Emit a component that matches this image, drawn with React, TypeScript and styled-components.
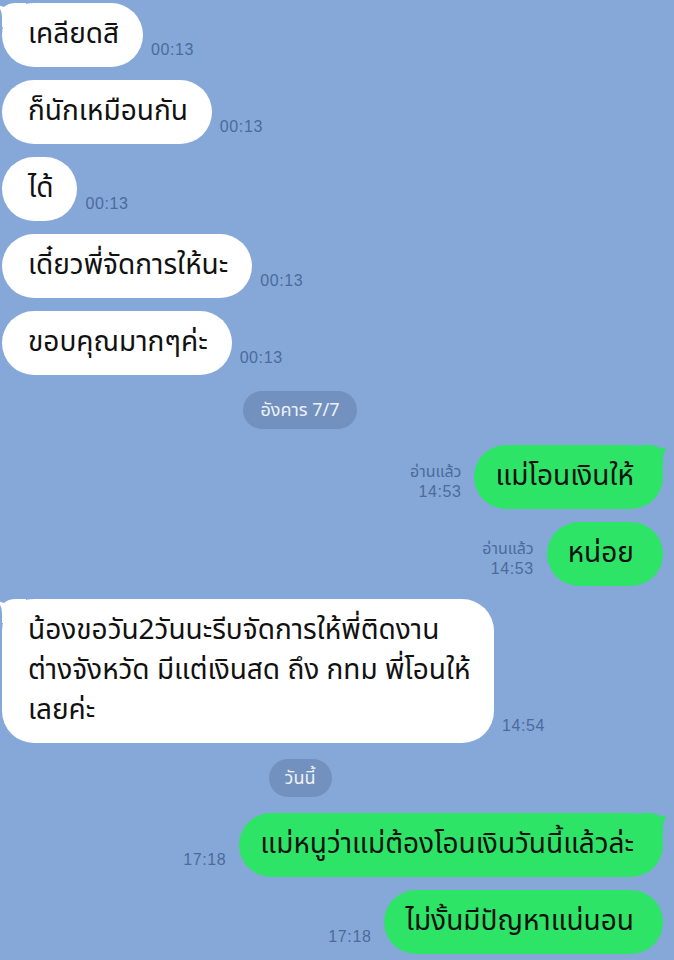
import styled, { createGlobalStyle } from 'styled-components';

const GlobalStyle = createGlobalStyle`
  html, body {
    margin: 0;
    padding: 0;
    background: #86a8d9;
  }
  body {
    width: 674px;
    height: 960px;
    overflow: hidden;
  }
`

const Chat = styled.div`
  display: flex;
  flex-direction: column;
  gap: 13px;
  padding-top: 3px;
  width: 674px;
  height: 960px;
  box-sizing: border-box;
  background: #86a8d9;
  font-family: "Noto Sans Thai", "Noto Sans", "DejaVu Sans", sans-serif;
`

const IncomingRow = styled.div`
  display: flex;
  align-items: flex-end;
  gap: 8px;
  padding-left: 2px;
`

const OutgoingRow = styled.div`
  display: flex;
  align-items: flex-end;
  justify-content: flex-end;
  gap: 13px;
  padding-right: 11px;
`

const DateRow = styled.div`
  display: flex;
  justify-content: center;
  padding-right: 74px;
  margin: 3px 0;
`

const DatePill = styled.div<{ $w: number }>`
  width: ${p => p.$w}px;
  height: 38px;
  border-radius: 19px;
  background: #7291be;
  color: #eef2f9;
  font-size: 18px;
  display: flex;
  align-items: center;
  justify-content: center;
`

const Bubble = styled.div<{ $out?: boolean; $w?: number }>`
  position: relative;
  box-sizing: border-box;
  ${p => p.$w ? `width: ${p.$w}px;` : ''}
  padding: ${p => p.$out ? '12px 29px 12px 21px' : '12px 24px 12px 26px'};
  border-radius: 32px;
  background: ${p => p.$out ? '#2de466' : '#ffffff'};
  color: #111;
  font-size: 28px;
  line-height: 40px;
  white-space: pre;
`

const Tail = styled.svg<{ $out?: boolean }>`
  position: absolute;
  top: 0;
  width: 28px;
  height: 24px;
  ${p => p.$out ? 'right: -4px;' : 'left: -4px; transform: scaleX(-1);'}
`

const Meta = styled.div<{ $out?: boolean }>`
  display: flex;
  flex-direction: column;
  align-items: ${p => p.$out ? 'flex-end' : 'flex-start'};
  padding-bottom: 7px;
  color: #4a6b9b;
  font-size: 16px;
  line-height: 20px;
`

const Read = styled.span`
  font-size: 16px;
`

const Time = styled.span`
  font-family: "Liberation Sans", Arial, sans-serif;
  letter-spacing: 0.6px;
`

function BubbleTail({ out }: { out?: boolean }) {
  return (
    <Tail $out={out} viewBox="0 0 28 24">
      <path d="M0 0 H10 Q18 0 22 4 L28 2 Q24 8 24 14 V24 H0 Z" fill={out ? '#2de466' : '#ffffff'} />
    </Tail>
  )
}

type Msg =
  | { kind: 'in'; text: string; time: string; tail?: boolean; w?: number }
  | { kind: 'out'; text: string; time: string; tail?: boolean; read?: boolean }
  | { kind: 'date'; text: string; w: number };

const messages: Msg[] = [
  { kind: 'in', text: 'เคลียดสิ', time: '00:13', tail: true },
  { kind: 'in', text: 'ก็นักเหมือนกัน', time: '00:13' },
  { kind: 'in', text: 'ได้', time: '00:13' },
  { kind: 'in', text: 'เดี๋ยวพี่จัดการให้นะ', time: '00:13' },
  { kind: 'in', text: 'ขอบคุณมากๆค่ะ', time: '00:13' },
  { kind: 'date', text: 'อังคาร 7/7', w: 114 },
  { kind: 'out', text: 'แม่โอนเงินให้', time: '14:53', tail: true, read: true },
  { kind: 'out', text: 'หน่อย', time: '14:53', read: true },
  { kind: 'in', text: 'น้องขอวัน2วันนะรีบจัดการให้พี่ติดงาน\nต่างจังหวัด มีแต่เงินสด ถึง กทม พี่โอนให้\nเลยค่ะ', time: '14:54', tail: true, w: 492 },
  { kind: 'date', text: 'วันนี้', w: 63 },
  { kind: 'out', text: 'แม่หนูว่าแม่ต้องโอนเงินวันนี้แล้วล่ะ', time: '17:18', tail: true },
  { kind: 'out', text: 'ไม่งั้นมีปัญหาแน่นอน', time: '17:18' },
];

export default function App() {
  return (
    <>
      <GlobalStyle />
      <Chat>
        {messages.map((m, i) => {
          if (m.kind === 'date') {
            return (
              <DateRow key={i}>
                <DatePill $w={m.w}>{m.text}</DatePill>
              </DateRow>
            )
          }
          if (m.kind === 'in') {
            return (
              <IncomingRow key={i}>
                <Bubble $w={m.w}>
                  {m.tail && <BubbleTail />}
                  {m.text}
                </Bubble>
                <Meta><Time>{m.time}</Time></Meta>
              </IncomingRow>
            )
          }
          return (
            <OutgoingRow key={i}>
              <Meta $out>
                {m.read && <Read>อ่านแล้ว</Read>}
                <Time>{m.time}</Time>
              </Meta>
              <Bubble $out>
                {m.tail && <BubbleTail out />}
                {m.text}
              </Bubble>
            </OutgoingRow>
          )
        })}
      </Chat>
    </>
  )
}
